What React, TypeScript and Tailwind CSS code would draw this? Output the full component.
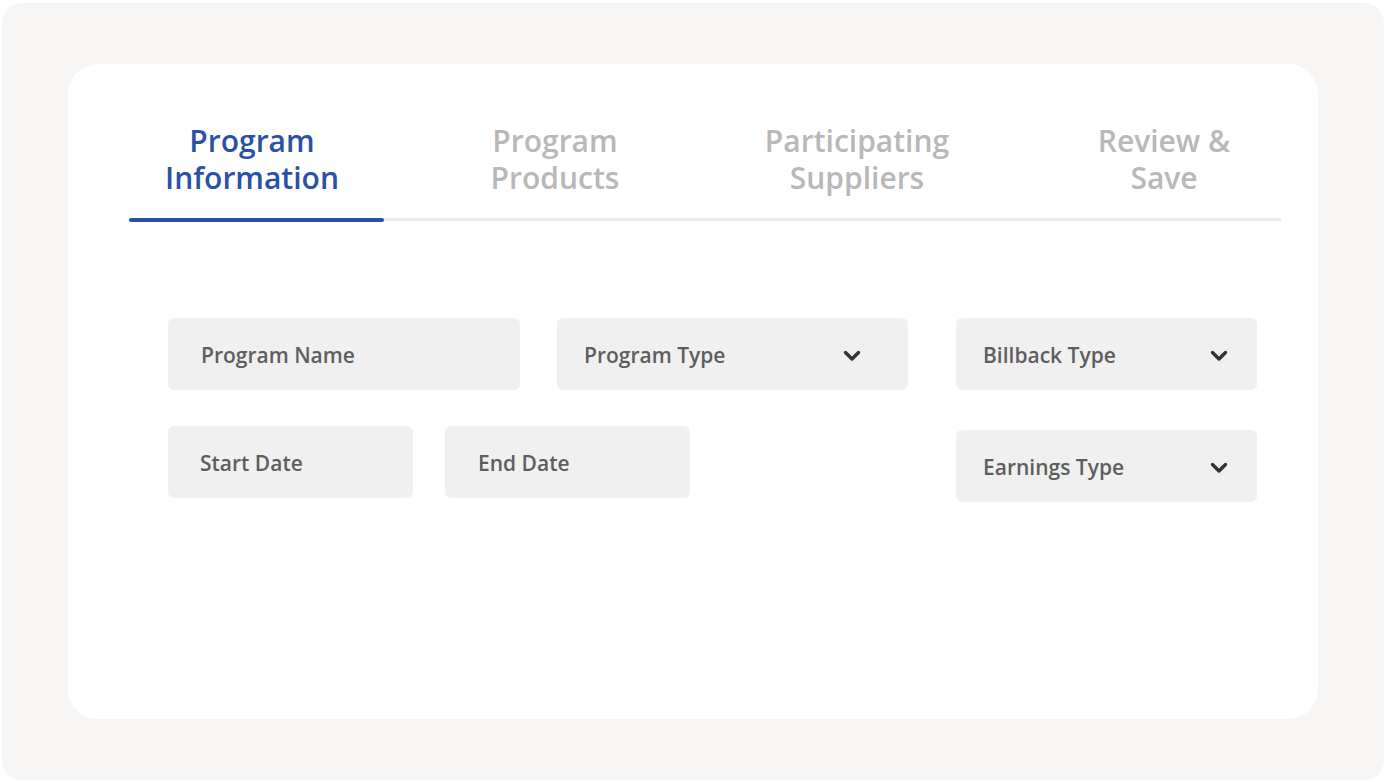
const tabs = [
    { label: "Program\nInformation", ml: "ml-[8px]" },
    { label: "Program\nProducts", ml: "ml-[73px]" },
    { label: "Participating\nSuppliers", ml: "ml-[72px]" },
    { label: "Review &\nSave", ml: "ml-[77px]" },
]

const Chevron = () => (
    <svg width="18" height="12" viewBox="0 0 18 12" fill="none">
        <path d="M2.5 2.5 L9 9 L15.5 2.5" stroke="#333333" strokeWidth="3.4" strokeLinecap="round" strokeLinejoin="round" />
    </svg>
)

const Field = ({ label, width, pl = "pl-[33px]", pr = "pr-[36px]", select }: { label: string, width: string, pl?: string, pr?: string, select?: boolean }) => {
    return <div className={`${width} ${pl} ${pr} h-[72px] pt-[3px] bg-[#f0f0f0] rounded-md flex items-center justify-between`}>
        <span className="text-[21px] font-semibold text-[#5e5e5e]">{label}</span>
        {select && <Chevron />}
    </div>
}

export default function App() {
    return <div className="w-[1386px] h-[782px] bg-white p-[2px] pt-[3px]" style={{ fontFamily: '"Open Sans", sans-serif' }}>
        <div className="w-[1382px] h-[777px] bg-[#f7f6f4] rounded-[20px] pl-[66px] pt-[61px]">
            <div className="w-[1250px] h-[655px] bg-white rounded-[30px] pl-[61px] pr-[37px] pt-[58px]">
                <div className="flex">
                    {tabs.map((t, i) => (
                        <div key={t.label} className={`w-[230px] shrink-0 flex flex-col items-center ${t.ml}`}>
                            <div className={`whitespace-pre-line text-center text-[30px] leading-[37px] font-semibold ${i === 0 ? "text-[#2a51a6]" : "text-[#b8b8b8]"}`}>
                                {t.label}
                            </div>
                        </div>
                    ))}
                </div>
                <div className="mt-[22px] h-[3px] bg-[#ebebeb] relative">
                    <div className="absolute left-0 top-[-0.5px] h-[4px] w-[255px] bg-[#2a51a6] rounded-full"></div>
                </div>
                <div className="flex justify-between mt-[97px] pl-[39px] pr-[24px]">
                    <div className="flex flex-col gap-[36px]">
                        <div className="flex gap-[37px]">
                            <Field label="Program Name" width="w-[352px]" />
                            <Field label="Program Type" width="w-[351px]" pl="pl-[27px]" pr="pr-[47px]" select />
                        </div>
                        <div className="flex gap-[32px]">
                            <Field label="Start Date" width="w-[245px]" pl="pl-[32px]" />
                            <Field label="End Date" width="w-[245px]" />
                        </div>
                    </div>
                    <div className="flex flex-col gap-[40px]">
                        <Field label="Billback Type" width="w-[301px]" pl="pl-[27px]" pr="pr-[29px]" select />
                        <Field label="Earnings Type" width="w-[301px]" pl="pl-[27px]" pr="pr-[29px]" select />
                    </div>
                </div>
            </div>
        </div>
    </div>
}
